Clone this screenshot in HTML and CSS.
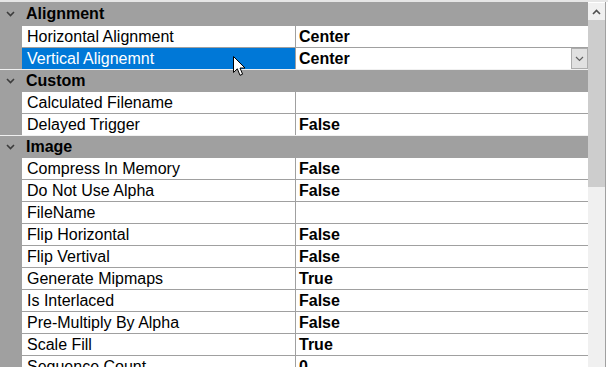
FILE: index.html
```html
<!DOCTYPE html>
<html lang="en">
<head>
  <meta charset="UTF-8">
  <title>Properties</title>
  <link rel="stylesheet" href="styles.css">
</head>
<body>
  <div class="frame">
    <div class="grid">
      <!-- Alignment -->
      <div class="cat first">
        <span class="toggle"><svg width="9" height="6" viewBox="0 0 9 6"><path d="M1 1 L4.5 4.5 L8 1" fill="none" stroke="#3c3c3c" stroke-width="1.6"/></svg></span>
        <span class="cat-name">Alignment</span>
      </div>
      <div class="row"><span class="gap"></span><span class="name">Horizontal Alignment</span><span class="val">Center</span></div>
      <div class="row sel"><span class="gap"></span><span class="name">Vertical Alignemnt</span><span class="val">Center<span class="drop"><svg width="9" height="6" viewBox="0 0 9 6"><path d="M1 1 L4.5 4.5 L8 1" fill="none" stroke="#606060" stroke-width="1.2"/></svg></span></span></div>

      <!-- Custom -->
      <div class="cat">
        <span class="toggle"><svg width="9" height="6" viewBox="0 0 9 6"><path d="M1 1 L4.5 4.5 L8 1" fill="none" stroke="#3c3c3c" stroke-width="1.6"/></svg></span>
        <span class="cat-name">Custom</span>
      </div>
      <div class="row"><span class="gap"></span><span class="name">Calculated Filename</span><span class="val"></span></div>
      <div class="row"><span class="gap"></span><span class="name">Delayed Trigger</span><span class="val">False</span></div>

      <!-- Image -->
      <div class="cat">
        <span class="toggle"><svg width="9" height="6" viewBox="0 0 9 6"><path d="M1 1 L4.5 4.5 L8 1" fill="none" stroke="#3c3c3c" stroke-width="1.6"/></svg></span>
        <span class="cat-name">Image</span>
      </div>
      <div class="row"><span class="gap"></span><span class="name">Compress In Memory</span><span class="val">False</span></div>
      <div class="row"><span class="gap"></span><span class="name">Do Not Use Alpha</span><span class="val">False</span></div>
      <div class="row"><span class="gap"></span><span class="name">FileName</span><span class="val"></span></div>
      <div class="row"><span class="gap"></span><span class="name">Flip Horizontal</span><span class="val">False</span></div>
      <div class="row"><span class="gap"></span><span class="name">Flip Vertival</span><span class="val">False</span></div>
      <div class="row"><span class="gap"></span><span class="name">Generate Mipmaps</span><span class="val">True</span></div>
      <div class="row"><span class="gap"></span><span class="name">Is Interlaced</span><span class="val">False</span></div>
      <div class="row"><span class="gap"></span><span class="name">Pre-Multiply By Alpha</span><span class="val">False</span></div>
      <div class="row"><span class="gap"></span><span class="name">Scale Fill</span><span class="val">True</span></div>
      <div class="row"><span class="gap"></span><span class="name">Sequence Count</span><span class="val">0</span></div>

      <!-- mouse pointer over the selected row -->
      <svg class="cursor" width="13" height="21" viewBox="0 0 13 21">
        <path d="M0.5 0.5 L0.5 16.5 L4.3 12.8 L7 19.3 L9.6 18.2 L7 12 L12 12 Z" fill="#fff" stroke="#000" stroke-width="1" stroke-linejoin="miter"/>
      </svg>
    </div>

    <div class="scrollbar">
      <div class="sb-btn"><svg width="9" height="6" viewBox="0 0 9 6"><path d="M1 5 L4.5 1.5 L8 5" fill="none" stroke="#505050" stroke-width="1.6"/></svg></div>
      <div class="sb-thumb"></div>
    </div>
    <div class="edge"></div>
  </div>
</body>
</html>
```

FILE: styles.css
```css
html, body { margin: 0; padding: 0; background: #fff; }
body {
  width: 608px; height: 367px; overflow: hidden;
  font-family: "Liberation Sans", Arial, sans-serif;
  font-size: 16px; color: #000;
}

.frame {
  display: flex;
  border-top: 2px solid #e6e6e6;
  height: 365px;
}

.grid { position: relative; width: 588px; background: #a0a0a0; }

/* category header */
.cat {
  display: flex; align-items: center;
  height: 21px;
  border-top: 1px solid #f0f0f0;
  background: #a0a0a0;
}
.cat.first { height: 23px; border-top: none; }
.toggle {
  width: 22px; display: flex; justify-content: center;
  padding-left: 0; padding-top: 1px;
  margin-left: -1px;
}
.cat-name { font-weight: bold; padding-left: 5px; line-height: 21px; }

/* property row */
.row {
  display: grid;
  grid-template-columns: 22px 273px 293px;
  height: 21px; line-height: 21px;
  border-top: 1px solid #a0a0a0;
}
.row .gap { background: #a0a0a0; }
.row .name { background: #fff; padding-left: 5px; white-space: nowrap; overflow: hidden; }
.row .val {
  position: relative;
  background: #fff; border-left: 1px solid #a0a0a0;
  padding-left: 3px; font-weight: bold; white-space: nowrap;
}
.row.sel .name { background: #0078d7; color: #fff; }

.drop {
  position: absolute; right: 0; top: 0;
  width: 15px; height: 19px;
  border: 1px solid #adadad;
  background: #e1e1e1;
  display: flex; align-items: center; justify-content: center;
}

.cursor { position: absolute; left: 233px; top: 54px; }

/* vertical scrollbar */
.scrollbar {
  width: 17px;
  margin-top: 1px;
  background: #f0f0f0;
  display: flex; flex-direction: column;
}
.sb-btn { height: 17px; display: flex; align-items: center; justify-content: center; }
.sb-thumb { margin: 0 2px 0 0; width: 17px; height: 167px; background: #cdcdcd; }
.edge { width: 1px; background: #a0a0a0; }
```
